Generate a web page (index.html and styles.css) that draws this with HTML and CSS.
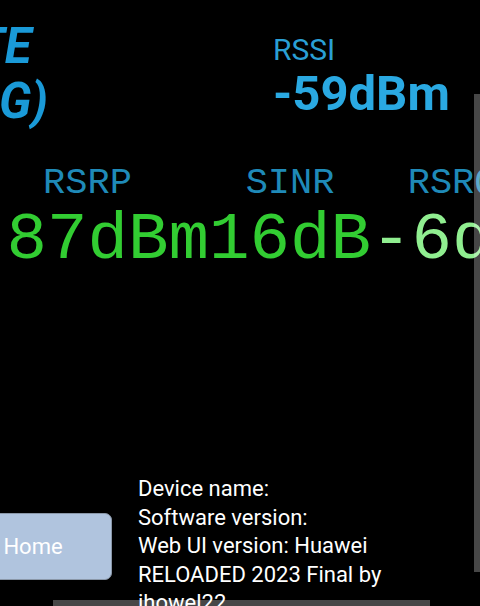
FILE: index.html
```html
<!DOCTYPE html>
<html>
<head>
<meta charset="utf-8">
<link rel="stylesheet" href="styles.css">
</head>
<body>
<div class="page">
  <div class="top">
    <div class="mode">LTE<br>(4G)</div>
    <div class="rssi">
      <div class="rssi-label">RSSI</div>
      <div class="rssi-value">-59dBm</div>
    </div>
  </div>
  <div class="signal">
    <div class="cell">
      <div class="label">RSRP</div>
      <div class="value good">-87dBm</div>
    </div>
    <div class="cell">
      <div class="label">SINR</div>
      <div class="value good">16dB</div>
    </div>
    <div class="cell">
      <div class="label">RSRQ</div>
      <div class="value ok">-6dB</div>
    </div>
  </div>
  <div class="bottom">
    <button class="home">Home</button>
    <div class="info">Device name:<br>Software version:<br>Web UI version: Huawei RELOADED 2023 Final by ihowel22</div>
  </div>
</div>
<div class="vscroll"></div>
<div class="hscroll"></div>
</body>
</html>
```
FILE: styles.css
```css
html, body {
  margin: 0;
  padding: 0;
  background: #000;
  overflow: hidden;
  height: 606px;
}
.page {
  margin-left: -34px;
  width: 560px;
  font-family: Roboto, "Liberation Sans", sans-serif;
}
.top {
  display: flex;
  padding-top: 19px;
}
.mode {
  width: 307px;
  margin-left: -11px;
  padding-left: 0;
  box-sizing: border-box;
  flex-shrink: 0;
  font-size: 49px;
  font-weight: bold;
  font-style: italic;
  line-height: 55px;
  color: #1a9ad8;
  margin-right: 11px;
}
.rssi {
  padding-top: 13px;
}
.rssi-label {
  font-size: 30px;
  line-height: 35px;
  color: #2a9fd5;
}
.rssi-value {
  font-size: 49px;
  font-weight: bold;
  line-height: 54px;
  color: #2aa9e2;
}
.signal {
  display: flex;
  margin-top: 32px;
  font-family: "Courier New", "Liberation Mono", monospace;
}
.cell {
  display: flex;
  flex-direction: column;
  align-items: center;
}
.label {
  font-size: 37px;
  line-height: 44px;
  color: #1f8ab8;
}
.value {
  font-size: 67.5px;
  line-height: 70px;
}
.good { color: #32cd32; }
.ok { color: #90ee90; }
.bottom {
  display: flex;
  align-items: center;
  margin-top: 200px;
}
.home {
  width: 154px;
  height: 67px;
  margin-left: -8px;
  flex-shrink: 0;
  background: #b0c4de;
  border: 1px solid #8a97a8;
  border-radius: 7px;
  color: #fff;
  font-family: Roboto, "Liberation Sans", sans-serif;
  font-size: 22px;
  padding: 0 4px 0 0;
}
.info {
  margin-left: 26px;
  width: 330px;
  font-size: 22px;
  line-height: 28.6px;
  color: #fff;
}
.vscroll {
  position: absolute;
  left: 474px;
  top: 94px;
  width: 6px;
  height: 478px;
  background: rgba(255, 255, 255, 0.28);
}
.hscroll {
  position: absolute;
  left: 53px;
  top: 600px;
  width: 377px;
  height: 6px;
  background: rgba(255, 255, 255, 0.28);
}
```
